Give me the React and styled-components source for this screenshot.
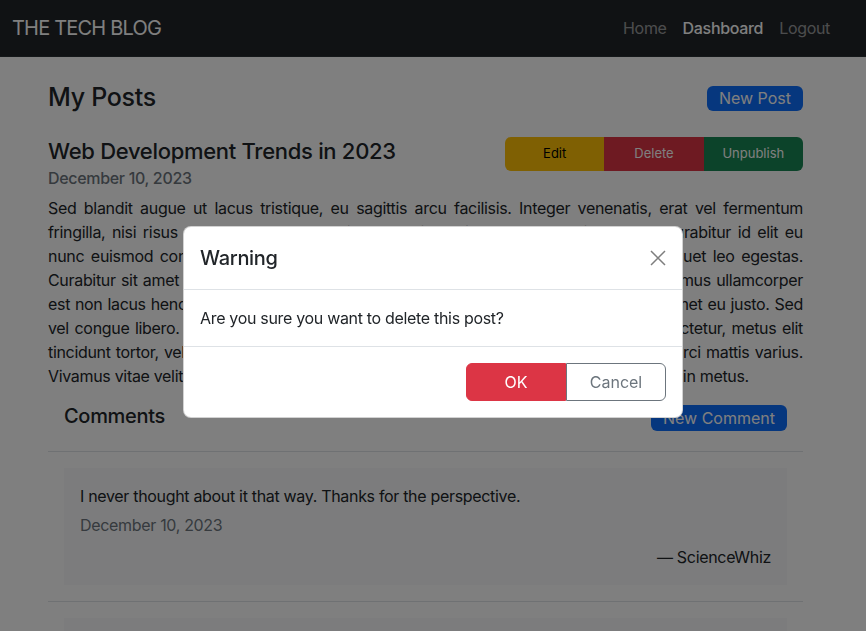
import React from "react";
import styled, { createGlobalStyle, css } from "styled-components";

const GlobalStyle = createGlobalStyle`
  * {
    box-sizing: border-box;
  }
  body {
    margin: 0;
    background: #fff;
    color: #212529;
    font-family: Inter, "Noto Sans", "Liberation Sans", sans-serif;
    font-size: 16px;
    line-height: 1.5;
    letter-spacing: -0.02em;
    overflow: hidden;
  }
`;

const Navbar = styled.nav`
  height: 57px;
  background: #212529;
  border-bottom: 1px solid #2b3035;
  display: flex;
  align-items: center;
  justify-content: space-between;
  padding: 0 28px 0 12px;
`;

const Brand = styled.div`
  color: #fff;
  font-size: 20px;
  letter-spacing: -0.8px;
`;

const NavLinks = styled.div`
  display: flex;
`;

const NavLink = styled.a`
  padding: 8px;
  color: ${props => (props.active ? "#fff" : "rgba(255, 255, 255, 0.55)")};
  font-weight: ${props => (props.active ? 500 : 400)};
  text-decoration: none;
`;

const Main = styled.main`
  padding: 21px 63px 0 48px;
`;

const PageHeader = styled.div`
  height: 40px;
  display: flex;
  align-items: center;
  justify-content: space-between;
`;

const PageTitle = styled.h2`
  margin: 0;
  font-size: 25px;
  font-weight: 500;
  letter-spacing: -0.3px;
`;

const SmallButton = styled.button`
  height: ${props => (props.tall ? 26 : 25)}px;
  padding: 0 12px;
  border: none;
  border-radius: 6px;
  background: #0d6efd;
  color: #fff;
  font: inherit;
  font-size: 16px;
  line-height: 1;
`;

const Post = styled.article`
  margin-top: 19px;
`;

const PostHeader = styled.div`
  display: flex;
  justify-content: space-between;
  align-items: flex-start;
`;

const PostTitle = styled.h3`
  margin: 0;
  font-size: 22px;
  line-height: 29px;
  font-weight: 500;
  letter-spacing: -0.3px;
`;

const PostDate = styled.h6`
  margin: 3px 0 0;
  font-size: 16px;
  line-height: 19px;
  font-weight: 500;
  color: #6c757d;
`;

const ActionGroup = styled.div`
  width: 298px;
  display: flex;
  border-radius: 6px;
  overflow: hidden;
`;

const actionColors = {
  warning: css`
    background: #ffc107;
    color: #000;
  `,
  danger: css`
    background: #dc3545;
    color: #fff;
  `,
  success: css`
    background: #198754;
    color: #fff;
  `,
};

const ActionButton = styled.button`
  flex: 1;
  height: 34px;
  border: none;
  font: inherit;
  font-size: 13px;
  ${props => actionColors[props.variant]}
`;

const PostBody = styled.div`
  margin-top: 8px;
`;

const Line = styled.span`
  display: block;
  white-space: nowrap;
  text-align: justify;
  text-align-last: ${props => (props.last ? "left" : "justify")};
`;

const Comments = styled.section`
  margin-top: 12px;
`;

const CommentsHeader = styled.div`
  height: 52px;
  padding: 0 16px 16px;
  display: flex;
  align-items: center;
  justify-content: space-between;
  border-bottom: 1px solid #dee2e6;
`;

const CommentsTitle = styled.h4`
  margin: 0 0 4px;
  font-size: 20px;
  font-weight: 500;
  letter-spacing: -0.3px;
`;

const CommentItem = styled.div`
  padding: 16px;
  border-bottom: 1px solid #dee2e6;
`;

const CommentCard = styled.blockquote`
  margin: 0;
  padding: 16px;
  background: #f8f9fa;
`;

const CommentText = styled.p`
  margin: 0;
`;

const CommentDate = styled.p`
  margin: 5px 0 0;
  color: #6c757d;
`;

const CommentAuthor = styled.footer`
  margin-top: 8px;
  text-align: right;
`;

const Backdrop = styled.div`
  position: fixed;
  inset: 0;
  background: rgba(0, 0, 0, 0.5);
`;

const Modal = styled.div`
  position: fixed;
  top: 226px;
  left: 50%;
  width: 500px;
  margin-left: -250px;
  background: #fff;
  border: 1px solid rgba(0, 0, 0, 0.175);
  border-radius: 8px;
`;

const ModalHeader = styled.div`
  display: flex;
  align-items: center;
  justify-content: space-between;
  padding: 16px;
  border-bottom: 1px solid #dee2e6;
`;

const ModalTitle = styled.h5`
  margin: 0;
  font-size: 20px;
  line-height: 30px;
  font-weight: 500;
`;

const CloseButton = styled.button`
  width: 16px;
  height: 16px;
  padding: 0;
  border: none;
  background: none;
  display: flex;
  opacity: 0.5;
`;

const ModalBody = styled.div`
  padding: 16px;
  border-bottom: 1px solid #dee2e6;
`;

const ModalFooter = styled.div`
  display: flex;
  justify-content: flex-end;
  padding: 16px;
`;

const FooterButton = styled.button`
  width: 100px;
  height: 38px;
  font: inherit;
  font-size: 16px;
  ${props =>
    props.primary
      ? css`
          background: #dc3545;
          color: #fff;
          border: 1px solid #dc3545;
          border-radius: 6px 0 0 6px;
        `
      : css`
          background: #fff;
          color: #6c757d;
          border: 1px solid #6c757d;
          border-radius: 0 6px 6px 0;
        `}
`;

const bodyLines = [
  "Sed blandit augue ut lacus tristique, eu sagittis arcu facilisis. Integer venenatis, erat vel fermentum",
  "fringilla, nisi risus sodales metus, at ultrices mauris sapien non lorem vitae nunc. Curabitur id elit eu",
  "nunc euismod convallis. Pellentesque habitant morbi tristique senectus et netus, aliquet leo egestas.",
  "Curabitur sit amet dolor in magna tempor consequat quis a nulla. Nam eget felis. Vivamus ullamcorper",
  "est non lacus hendrerit faucibus. Donec porttitor, mauris at placerat tempus, velit sit amet eu justo. Sed",
  "vel congue libero. Aliquam erat volutpat. Suspendisse potenti. Nullam ac dolor, consectetur, metus elit",
  "tincidunt tortor, vel pharetra ipsum lacinia at. Fusce dignissim, nibh sit amet euismod orci mattis varius.",
  "Vivamus vitae velit nec lectus rutrum posuere. Integer quis tortor vel nisi pretium gravid in metus.",
];

const comments = [
  {
    text: "I never thought about it that way. Thanks for the perspective.",
    date: "December 10, 2023",
    author: "ScienceWhiz",
  },
  {
    text: "Great overview of where things are heading this year.",
    date: "December 11, 2023",
    author: "CodeCrafter",
  },
];

export default function App() {
  return (
    <>
      <GlobalStyle />
      <Navbar>
        <Brand>THE TECH BLOG</Brand>
        <NavLinks>
          <NavLink>Home</NavLink>
          <NavLink active>Dashboard</NavLink>
          <NavLink>Logout</NavLink>
        </NavLinks>
      </Navbar>
      <Main>
        <PageHeader>
          <PageTitle>My Posts</PageTitle>
          <SmallButton>New Post</SmallButton>
        </PageHeader>
        <Post>
          <PostHeader>
            <div>
              <PostTitle>Web Development Trends in 2023</PostTitle>
              <PostDate>December 10, 2023</PostDate>
            </div>
            <ActionGroup>
              <ActionButton variant="warning">Edit</ActionButton>
              <ActionButton variant="danger">Delete</ActionButton>
              <ActionButton variant="success">Unpublish</ActionButton>
            </ActionGroup>
          </PostHeader>
          <PostBody>
            {bodyLines.map((line, i) => (
              <Line key={i} last={i === bodyLines.length - 1}>
                {line}
              </Line>
            ))}
          </PostBody>
          <Comments>
            <CommentsHeader>
              <CommentsTitle>Comments</CommentsTitle>
              <SmallButton tall>New Comment</SmallButton>
            </CommentsHeader>
            {comments.map((c, i) => (
              <CommentItem key={i}>
                <CommentCard>
                  <CommentText>{c.text}</CommentText>
                  <CommentDate>{c.date}</CommentDate>
                  <CommentAuthor>— {c.author}</CommentAuthor>
                </CommentCard>
              </CommentItem>
            ))}
          </Comments>
        </Post>
      </Main>
      <Backdrop />
      <Modal>
        <ModalHeader>
          <ModalTitle>Warning</ModalTitle>
          <CloseButton aria-label="Close">
            <svg width="16" height="16" viewBox="0 0 16 16">
              <path d="M1 1L15 15M15 1L1 15" stroke="#000" strokeWidth="1.5" />
            </svg>
          </CloseButton>
        </ModalHeader>
        <ModalBody>Are you sure you want to delete this post?</ModalBody>
        <ModalFooter>
          <FooterButton primary>OK</FooterButton>
          <FooterButton>Cancel</FooterButton>
        </ModalFooter>
      </Modal>
    </>
  );
}
